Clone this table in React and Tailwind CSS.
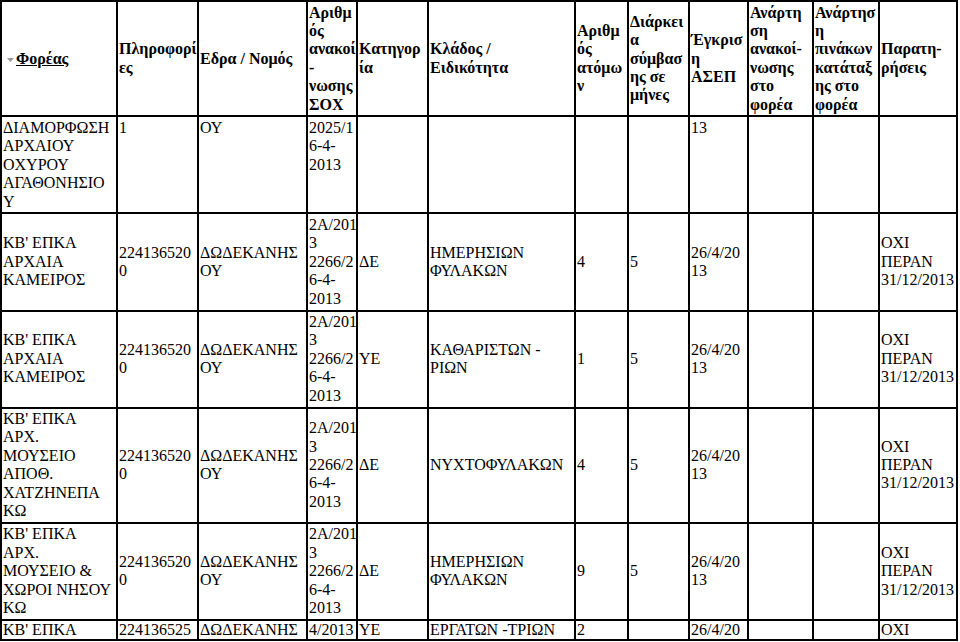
import React from "react";

const colW = [
  "w-[116px]",
  "w-[81px]",
  "w-[109px]",
  "w-[50px]",
  "w-[71px]",
  "w-[147px]",
  "w-[53px]",
  "w-[61px]",
  "w-[59px]",
  "w-[65px]",
  "w-[66px]",
  "w-[78px]",
];

const headers = [
  null,
  ["Πληροφορί", "ες"],
  ["Εδρα / Νομός"],
  ["Αριθμ", "ός", "ανακοί", "-", "νωσης", "ΣΟΧ"],
  ["Κατηγορ", "ία"],
  ["Κλάδος /", "Ειδικότητα"],
  ["Αριθμ", "ός", "ατόμω", "ν"],
  ["Διάρκει", "α", "σύμβασ", "ης σε", "μήνες"],
  ["Έγκρισ", "η", "ΑΣΕΠ"],
  ["Ανάρτη", "ση", "ανακοί-", "νωσης", "στο", "φορέα"],
  ["Ανάρτησ", "η", "πινάκων", "κατάταξ", "ης στο", "φορέα"],
  ["Παρατη-", "ρήσεις"],
];

const oxi = ["ΟΧΙ", "ΠΕΡΑΝ", "31/12/2013"];
const decision = ["2Α/201", "3", "2266/2", "6-4-", "2013"];

const rows = [
  {
    valign: "align-top",
    cells: [
      ["ΔΙΑΜΟΡΦΩΣΗ", "ΑΡΧΑΙΟΥ", "ΟΧΥΡΟΥ", "ΑΓΑΘΟΝΗΣΙΟ", "Υ"],
      ["1"],
      ["ΟΥ"],
      ["2025/1", "6-4-", "2013"],
      [],
      [],
      [],
      [],
      ["13"],
      [],
      [],
      [],
    ],
  },
  {
    cells: [
      ["ΚΒ' ΕΠΚΑ", "ΑΡΧΑΙΑ", "ΚΑΜΕΙΡΟΣ"],
      ["224136520", "0"],
      ["ΔΩΔΕΚΑΝΗΣ", "ΟΥ"],
      decision,
      ["ΔΕ"],
      ["ΗΜΕΡΗΣΙΩΝ", "ΦΥΛΑΚΩΝ"],
      ["4"],
      ["5"],
      ["26/4/20", "13"],
      [],
      [],
      oxi,
    ],
  },
  {
    cells: [
      ["ΚΒ' ΕΠΚΑ", "ΑΡΧΑΙΑ", "ΚΑΜΕΙΡΟΣ"],
      ["224136520", "0"],
      ["ΔΩΔΕΚΑΝΗΣ", "ΟΥ"],
      decision,
      ["ΥΕ"],
      ["ΚΑΘΑΡΙΣΤΩΝ -", "ΡΙΩΝ"],
      ["1"],
      ["5"],
      ["26/4/20", "13"],
      [],
      [],
      oxi,
    ],
  },
  {
    cells: [
      ["ΚΒ' ΕΠΚΑ", "ΑΡΧ.", "ΜΟΥΣΕΙΟ", "ΑΠΟΘ.", "ΧΑΤΖΗΝΕΠΑ", "ΚΩ"],
      ["224136520", "0"],
      ["ΔΩΔΕΚΑΝΗΣ", "ΟΥ"],
      decision,
      ["ΔΕ"],
      ["ΝΥΧΤΟΦΥΛΑΚΩΝ"],
      ["4"],
      ["5"],
      ["26/4/20", "13"],
      [],
      [],
      oxi,
    ],
  },
  {
    cells: [
      ["ΚΒ' ΕΠΚΑ", "ΑΡΧ.", "ΜΟΥΣΕΙΟ &", "ΧΩΡΟΙ ΝΗΣΟΥ", "ΚΩ"],
      ["224136520", "0"],
      ["ΔΩΔΕΚΑΝΗΣ", "ΟΥ"],
      decision,
      ["ΔΕ"],
      ["ΗΜΕΡΗΣΙΩΝ", "ΦΥΛΑΚΩΝ"],
      ["9"],
      ["5"],
      ["26/4/20", "13"],
      [],
      [],
      oxi,
    ],
  },
  {
    valign: "align-top",
    tight: true,
    cells: [
      ["ΚΒ' ΕΠΚΑ"],
      ["224136525"],
      ["ΔΩΔΕΚΑΝΗΣ"],
      ["4/2013"],
      ["ΥΕ"],
      ["ΕΡΓΑΤΩΝ -ΤΡΙΩΝ"],
      ["2"],
      [],
      ["26/4/20"],
      [],
      [],
      ["ΟΧΙ"],
    ],
  },
];

const Lines = ({ lines }) =>
  lines.map((l, i) => (
    <React.Fragment key={i}>
      {i > 0 && <br />}
      {l}
    </React.Fragment>
  ));

export default function App() {
  return (
    <div className="bg-white min-h-[642px] text-black">
      <table className="table-fixed border-separate border-spacing-0 border border-black w-[958px] [font-family:'Liberation_Serif',serif] text-[16px] leading-[18.4px]">
        <thead>
          <tr>
            {headers.map((h, i) => (
              <th
                key={i}
                className={`${colW[i]} border border-black px-px py-[1.5px] align-middle text-left font-bold whitespace-nowrap`}
              >
                {h === null ? (
                  <span className="inline-flex items-center">
                    <svg width="9" height="6" viewBox="0 0 9 6" className="ml-[3px] mr-[1px]">
                      <path d="M1 1 L8 1 L4.5 5 Z" fill="#9a9a9a" />
                    </svg>
                    <span className="underline">Φορέας</span>
                  </span>
                ) : (
                  <Lines lines={h} />
                )}
              </th>
            ))}
          </tr>
        </thead>
        <tbody>
          {rows.map((row, r) => (
            <tr key={r}>
              {row.cells.map((c, i) => (
                <td
                  key={i}
                  className={`${colW[i]} border border-black px-px ${
                    row.tight ? "py-0" : "py-[1.5px]"
                  } text-left whitespace-nowrap ${row.valign || "align-middle"}`}
                >
                  <Lines lines={c} />
                </td>
              ))}
            </tr>
          ))}
        </tbody>
      </table>
    </div>
  );
}
